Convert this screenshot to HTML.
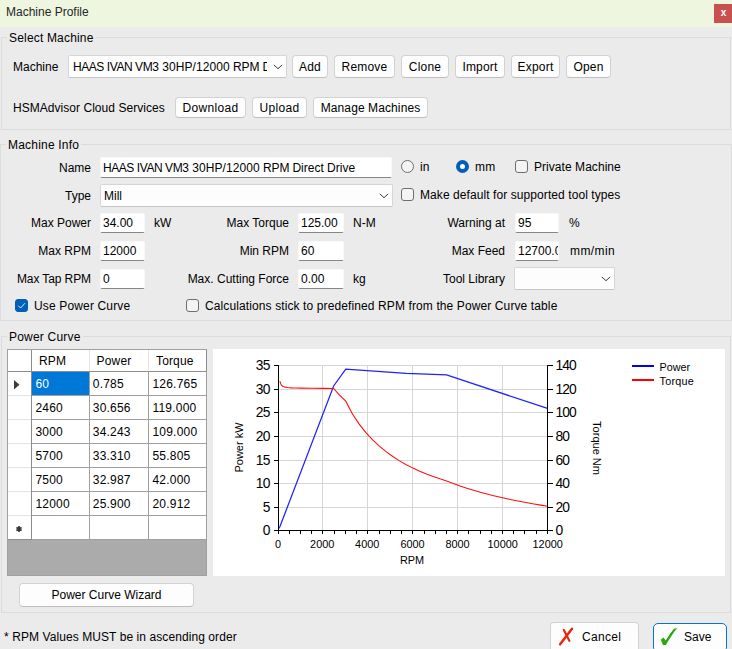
<!DOCTYPE html>
<html><head><meta charset="utf-8"><title>Machine Profile</title>
<style>
html,body{margin:0;padding:0;}
body{width:732px;height:649px;background:#ebebeb;position:relative;overflow:hidden;font-family:"Liberation Sans",Arial,sans-serif;font-size:12px;color:#000;}
.a{position:absolute;white-space:nowrap;line-height:14px;height:14px;}
.r{text-align:right;}
#tb{position:absolute;left:0;top:0;width:732px;height:27px;background:#eef6e0;}
#ttl{left:6px;top:5px;font-size:12px;color:#262626;}
#cls{position:absolute;left:714px;top:4px;width:18px;height:19px;background:#c85050;color:#fff;font-size:10px;font-weight:bold;text-align:center;line-height:18px;text-indent:1px;}
.gb{position:absolute;border:1px solid #dcdcdc;box-sizing:border-box;}
.gl{position:absolute;margin-top:1px;background:#ebebeb;padding:0 2px;line-height:14px;height:14px;white-space:nowrap;}
.btn{position:absolute;box-sizing:border-box;background:#fdfdfd;border:1px solid #d2d2d2;border-bottom-color:#bebebe;border-radius:4px;text-align:center;white-space:nowrap;line-height:20px;height:22px;}
.in{position:absolute;box-sizing:border-box;background:#fff;border:1px solid #f8f8f8;border-bottom:1px solid #868686;border-radius:2px;height:20px;line-height:18px;padding-left:2px;white-space:nowrap;overflow:hidden;}
.cb{position:absolute;box-sizing:border-box;background:#fdfdfd;border:1px solid #d6d6d6;border-bottom-color:#c6c6c6;border-radius:2px;height:22px;line-height:20px;padding-left:4px;white-space:nowrap;overflow:hidden;}
.chev{position:absolute;}
.ck{position:absolute;box-sizing:border-box;width:13px;height:13px;border:1px solid #6e6e6e;border-radius:3px;background:#f4f4f4;}
.ck.on{background:#005fb8;border-color:#005fb8;}
.rd{position:absolute;box-sizing:border-box;width:13px;height:13px;border:1px solid #6e6e6e;border-radius:50%;background:#f4f4f4;}
.rd.on{border:4px solid #005fb8;background:#fff;}

#grid{position:absolute;left:7px;top:349px;width:200px;height:227px;box-sizing:border-box;border:1px solid #a0a0a0;background:#ababab;}
#grid .gh{position:absolute;background:#fff;}
#grid .sel{position:absolute;background:#0078d7;}
#grid .hl{position:absolute;height:1px;background:#a0a0a0;}
#grid .hl.d,#grid .vl.d{background:#8c8c8c;}
#grid .hl.lt,#grid .vl.lt{background:#e3e3e3;}
#grid .vl{position:absolute;width:1px;background:#a0a0a0;}
#grid .c{position:absolute;white-space:nowrap;line-height:14px;letter-spacing:0.2px;}
#grid .c.h{letter-spacing:0.15px;}
#grid .c.w{color:#fff;}
#chart{position:absolute;left:213px;top:349px;width:512px;height:227px;background:#fff;overflow:hidden;}
</style></head><body>
<div id="tb"></div>
<div class="a" id="ttl">Machine Profile</div>
<div id="cls">x</div>

<!-- Select Machine -->
<div class="gb" style="left:1px;top:37px;width:730px;height:93px;"></div>
<div class="gl" style="left:7px;top:30px;letter-spacing:0.18px;">Select Machine</div>
<div class="a" style="left:13px;top:60px;">Machine</div>
<div class="cb" style="left:68px;top:55px;width:219px;height:23px;line-height:22px;padding-left:4px;"><div style="width:194px;overflow:hidden;letter-spacing:-0.17px;"><span style="letter-spacing:-0.44px">HAAS IVAN VM</span><span style="letter-spacing:0.06px">3 30HP/12000 </span><span style="letter-spacing:-0.15px">RPM </span><span style="letter-spacing:0">Direct Drive</span></div></div>
<svg class="chev" style="left:273px;top:64px;" width="10" height="7" viewBox="0 0 10 7"><path d="M0.8 0.9 L5 4.7 L9.2 0.9" fill="none" stroke="#3c3c3c" stroke-width="1"/></svg>
<div class="btn" style="left:292px;top:55px;width:36px;height:23px;line-height:23px;letter-spacing:0.2px;">Add</div>
<div class="btn" style="left:334px;top:55px;width:61px;height:23px;line-height:23px;letter-spacing:0.2px;">Remove</div>
<div class="btn" style="left:401px;top:55px;width:48px;height:23px;line-height:23px;letter-spacing:0.2px;">Clone</div>
<div class="btn" style="left:455px;top:55px;width:50px;height:23px;line-height:23px;letter-spacing:0.2px;">Import</div>
<div class="btn" style="left:511px;top:55px;width:49px;height:23px;line-height:23px;letter-spacing:0.2px;">Export</div>
<div class="btn" style="left:566px;top:55px;width:45px;height:23px;line-height:23px;letter-spacing:0.2px;">Open</div>
<div class="a" style="left:13px;top:101px;letter-spacing:0.04px;">HSMAdvisor Cloud Services</div>
<div class="btn" style="left:175px;top:97px;width:71px;height:21px;letter-spacing:0.3px;">Download</div>
<div class="btn" style="left:252px;top:97px;width:55px;height:21px;letter-spacing:0.3px;">Upload</div>
<div class="btn" style="left:313px;top:97px;width:115px;height:21px;letter-spacing:0.1px;">Manage Machines</div>

<!-- Machine Info -->
<div class="gb" style="left:0px;top:144px;width:732px;height:177px;"></div>
<div class="gl" style="left:6px;top:137px;letter-spacing:0.2px;">Machine Info</div>
<div class="a r" style="left:0;width:91px;top:161px;">Name</div>
<div class="in" style="left:100px;top:157px;width:292px;height:21px;line-height:21px;padding-left:2px;letter-spacing:-0.15px;"><span style="letter-spacing:-0.44px">HAAS IVAN VM</span><span style="letter-spacing:0.06px">3 30HP/12000 </span><span style="letter-spacing:-0.15px">RPM </span><span style="letter-spacing:0">Direct Drive</span></div>
<div class="rd" style="left:401px;top:160px;"></div>
<div class="a" style="left:420px;top:160px;">in</div>
<div class="rd on" style="left:456px;top:160px;"></div>
<div class="a" style="left:475px;top:160px;letter-spacing:0.3px;">mm</div>
<div class="ck" style="left:515px;top:160px;"></div>
<div class="a" style="left:534px;top:160px;letter-spacing:0.05px;">Private Machine</div>

<div class="a r" style="left:0;width:91px;top:189px;">Type</div>
<div class="cb" style="left:100px;top:184px;width:293px;height:23px;line-height:22px;padding-left:3px;">Mill</div>
<svg class="chev" style="left:379px;top:193px;" width="10" height="7" viewBox="0 0 10 7"><path d="M0.8 0.9 L5 4.7 L9.2 0.9" fill="none" stroke="#3c3c3c" stroke-width="1"/></svg>
<div class="ck" style="left:401px;top:188px;"></div>
<div class="a" style="left:420px;top:188px;letter-spacing:0.08px;">Make default for supported tool types</div>

<div class="a r" style="left:0;width:91px;top:216px;">Max Power</div>
<div class="in" style="left:100px;top:213px;width:45px;">34.00</div>
<div class="a" style="left:154px;top:216px;">kW</div>
<div class="a r" style="left:180px;width:109px;top:216px;">Max Torque</div>
<div class="in" style="left:298px;top:213px;width:46px;">125.00</div>
<div class="a" style="left:353px;top:216px;">N-M</div>
<div class="a r" style="left:400px;width:105px;top:216px;">Warning at</div>
<div class="in" style="left:515px;top:213px;width:44px;">95</div>
<div class="a" style="left:569px;top:216px;">%</div>

<div class="a r" style="left:0;width:91px;top:244px;">Max RPM</div>
<div class="in" style="left:100px;top:241px;width:45px;">12000</div>
<div class="a r" style="left:180px;width:109px;top:244px;">Min RPM</div>
<div class="in" style="left:298px;top:241px;width:46px;">60</div>
<div class="a r" style="left:400px;width:105px;top:244px;">Max Feed</div>
<div class="in" style="left:515px;top:241px;width:44px;">12700.00</div>
<div class="a" style="left:570px;top:244px;letter-spacing:0.4px;">mm/min</div>

<div class="a r" style="left:0;width:91px;top:272px;letter-spacing:-0.1px;">Max Tap RPM</div>
<div class="in" style="left:100px;top:269px;width:45px;">0</div>
<div class="a r" style="left:180px;width:109px;top:272px;">Max. Cutting Force</div>
<div class="in" style="left:298px;top:269px;width:46px;">0.00</div>
<div class="a" style="left:353px;top:272px;">kg</div>
<div class="a r" style="left:400px;width:105px;top:272px;">Tool Library</div>
<div class="cb" style="left:514px;top:267px;width:101px;height:23px;"></div>
<svg class="chev" style="left:601px;top:276px;" width="10" height="7" viewBox="0 0 10 7"><path d="M0.8 0.9 L5 4.7 L9.2 0.9" fill="none" stroke="#3c3c3c" stroke-width="1"/></svg>

<div class="ck on" style="left:15px;top:299px;"><svg width="13" height="13" viewBox="0 0 13 13" style="position:absolute;left:-1px;top:-1px"><path d="M3.2 6.6 L5.6 9 L10 4.2" fill="none" stroke="#e8f0f9" stroke-width="0.95"/></svg></div>
<div class="a" style="left:34px;top:299px;letter-spacing:0.15px;">Use Power Curve</div>
<div class="ck" style="left:186px;top:299px;"></div>
<div class="a" style="left:205px;top:299px;letter-spacing:0.11px;">Calculations stick to predefined RPM from the Power Curve table</div>

<!-- Power Curve -->
<div class="gb" style="left:1px;top:336px;width:730px;height:277px;"></div>
<div class="gl" style="left:7px;top:329px;letter-spacing:0.2px;">Power Curve</div>

<!--GS--><div id="grid">
<div class="gh" style="left:0;top:0;width:199px;height:190px;"></div>
<div class="sel" style="left:24px;top:22px;width:57px;height:23px;"></div>
<div class="hl d" style="left:0;top:21px;width:199px;"></div>
<div class="hl lt" style="left:0;top:45px;width:23px;"></div><div class="hl" style="left:23px;top:45px;width:176px;"></div>
<div class="hl lt" style="left:0;top:69px;width:23px;"></div><div class="hl" style="left:23px;top:69px;width:176px;"></div>
<div class="hl lt" style="left:0;top:93px;width:23px;"></div><div class="hl" style="left:23px;top:93px;width:176px;"></div>
<div class="hl lt" style="left:0;top:117px;width:23px;"></div><div class="hl" style="left:23px;top:117px;width:176px;"></div>
<div class="hl lt" style="left:0;top:141px;width:23px;"></div><div class="hl" style="left:23px;top:141px;width:176px;"></div>
<div class="hl lt" style="left:0;top:165px;width:23px;"></div><div class="hl" style="left:23px;top:165px;width:176px;"></div>
<div class="hl lt" style="left:0;top:189px;width:23px;"></div><div class="hl" style="left:23px;top:189px;width:176px;"></div>
<div class="hl d" style="left:0;top:189px;width:23px;"></div>
<div class="vl d" style="left:23px;top:0;height:190px;"></div>
<div class="vl" style="left:81px;top:21px;height:169px;"></div>
<div class="vl" style="left:140px;top:21px;height:169px;"></div>
<div class="vl" style="left:198px;top:21px;height:169px;"></div>
<div class="vl lt" style="left:81px;top:0;height:21px;"></div>
<div class="vl lt" style="left:140px;top:0;height:21px;"></div>
<div class="vl d" style="left:198px;top:0;height:21px;"></div>
<div class="c h" style="left:31px;top:4px;">RPM</div>
<div class="c h" style="left:88.6px;top:4px;">Power</div>
<div class="c h" style="left:148px;top:4px;">Torque</div>
<div class="c w" style="left:27.5px;top:27px;">60</div>
<div class="c" style="left:84.8px;top:27px;">0.785</div>
<div class="c" style="left:144.5px;top:27px;">126.765</div>
<div class="c" style="left:27.5px;top:51px;">2460</div>
<div class="c" style="left:84.8px;top:51px;">30.656</div>
<div class="c" style="left:144.5px;top:51px;">119.000</div>
<div class="c" style="left:27.5px;top:75px;">3000</div>
<div class="c" style="left:84.8px;top:75px;">34.243</div>
<div class="c" style="left:144.5px;top:75px;">109.000</div>
<div class="c" style="left:27.5px;top:99px;">5700</div>
<div class="c" style="left:84.8px;top:99px;">33.310</div>
<div class="c" style="left:144.5px;top:99px;">55.805</div>
<div class="c" style="left:27.5px;top:123px;">7500</div>
<div class="c" style="left:84.8px;top:123px;">32.987</div>
<div class="c" style="left:144.5px;top:123px;">42.000</div>
<div class="c" style="left:27.5px;top:147px;">12000</div>
<div class="c" style="left:84.8px;top:147px;">25.900</div>
<div class="c" style="left:144.5px;top:147px;">20.912</div>
<svg style="position:absolute;left:6px;top:30px;" width="6" height="10" viewBox="0 0 6 10"><path d="M0 0 L5.5 4.75 L0 9.5 Z" fill="#3c3c3c"/></svg>
<svg style="position:absolute;left:7px;top:175px;" width="8" height="8" viewBox="-4 -4 8 8"><path d="M0 -2.9V2.9M-2.6 -1.5L2.6 1.5M-2.6 1.5L2.6 -1.5" stroke="#3a3a3a" stroke-width="1.7" fill="none"/><circle r="1.6" fill="#3a3a3a"/></svg>
</div><!--GE-->

<!--CS--><div id="chart">
<svg width="512" height="227" viewBox="213 349 512 227" style="position:absolute;left:0;top:0;font-family:'Liberation Sans',Arial,sans-serif;">
<g stroke="#d6d6d6" stroke-width="1" shape-rendering="crispEdges"><path d="M279 365.5H547M279 389.5H547M279 412.5H547M279 436.5H547M279 460.5H547M279 483.5H547M279 507.5H547"/><path d="M322.5 365V530M367.5 365V530M412.5 365V530M457.5 365V530M502.5 365V530"/></g>
<polyline points="279.0,528.4 279.85,526.80 333.64,385.98 345.75,369.07 406.27,373.47 446.62,374.99 547.50,408.40" fill="none" stroke="#2020ff" stroke-width="1.25"/>
<polyline points="279.85,381.10 281.19,384.98 282.98,386.43 285.23,387.15 287.47,387.52 291.95,387.88 296.43,388.06 300.92,388.17 312.12,388.32 323.33,388.39 333.64,388.43 339.02,394.69 345.75,401.14 352.48,414.07 359.20,424.10 365.93,432.58 372.65,439.85 379.38,446.16 386.10,451.67 392.82,456.54 399.55,460.86 406.27,464.73 413.00,468.12 419.73,471.19 426.45,473.98 433.18,476.52 439.90,478.85 446.62,481.00 453.35,483.59 460.08,485.98 466.80,488.20 473.52,490.27 480.25,492.20 486.98,494.01 493.70,495.71 500.43,497.30 507.15,498.80 513.88,500.21 520.60,501.54 527.33,502.80 534.05,504.00 540.78,505.13 547.50,506.21" fill="none" stroke="#ff1010" stroke-width="1.1"/>
<g stroke="#000" stroke-width="1" shape-rendering="crispEdges"><path d="M278.5 365V531M547.5 365V531M278 530.5H548"/><path d="M274 365.5H278M274 389.5H278M274 412.5H278M274 436.5H278M274 460.5H278M274 483.5H278M274 507.5H278M274 530.5H278"/><path d="M548 365.5H553M548 389.5H553M548 412.5H553M548 436.5H553M548 460.5H553M548 483.5H553M548 507.5H553M548 530.5H553"/><path d="M278.5 531V534M289.5 531V534M300.5 531V534M311.5 531V534M322.5 531V534M334.5 531V534M345.5 531V534M356.5 531V534M367.5 531V534M379.5 531V534M390.5 531V534M401.5 531V534M412.5 531V534M424.5 531V534M435.5 531V534M446.5 531V534M457.5 531V534M468.5 531V534M480.5 531V534M491.5 531V534M502.5 531V534M513.5 531V534M524.5 531V534M536.5 531V534M547.5 531V534"/></g>
<g font-size="13.8px" letter-spacing="-0.85" text-anchor="end"><text x="269.5" y="370">35</text><text x="269.5" y="394">30</text><text x="269.5" y="417">25</text><text x="269.5" y="441">20</text><text x="269.5" y="465">15</text><text x="269.5" y="488">10</text><text x="269.5" y="512">5</text><text x="269.5" y="535">0</text></g>
<g font-size="13.8px" letter-spacing="-0.85"><text x="555.4" y="370">140</text><text x="555.4" y="394">120</text><text x="555.4" y="417">100</text><text x="555.4" y="441">80</text><text x="555.4" y="465">60</text><text x="555.4" y="488">40</text><text x="555.4" y="512">20</text><text x="555.4" y="535">0</text></g>
<g font-size="10.9px" text-anchor="middle"><text x="278" y="548">0</text><text x="322.2" y="548">2000</text><text x="367.2" y="548">4000</text><text x="412.5" y="548">6000</text><text x="457.5" y="548">8000</text><text x="502.7" y="548">10000</text><text x="547.7" y="548">12000</text><text x="412" y="563.5">RPM</text></g>
<text font-size="11px" text-anchor="middle" transform="translate(242.5 447.5) rotate(-90)">Power kW</text>
<text font-size="11px" text-anchor="middle" transform="translate(593 448) rotate(90)">Torque Nm</text>
<path d="M632 366H654" stroke="#0000ff" stroke-width="2" shape-rendering="crispEdges"/>
<path d="M632 380H654" stroke="#ff0000" stroke-width="2" shape-rendering="crispEdges"/>
<g font-size="10.8px"><text x="659.5" y="371">Power</text><text x="659.5" y="385" letter-spacing="0.25">Torque</text></g>
</svg>
</div><!--CE-->

<div class="btn" style="left:19px;top:583px;width:175px;height:24px;line-height:22px;">Power Curve Wizard</div>
<div class="a" style="left:4px;top:630px;letter-spacing:0.08px;">* RPM Values MUST be in ascending order</div>

<div class="btn" style="left:550px;top:622px;width:89px;height:30px;"></div>
<svg style="position:absolute;left:555px;top:624px;" width="22" height="25" viewBox="555 624 22 25"><path d="M572 628.8 L560.1 644.2" fill="none" stroke="#e6290d" stroke-width="2.5" stroke-linecap="round"/><path d="M563.8 630 L569.4 640.8" fill="none" stroke="#e6290d" stroke-width="2.2" stroke-linecap="round"/></svg>
<div class="a" style="left:582px;top:630px;letter-spacing:0.3px;">Cancel</div>
<div class="btn" style="left:653px;top:622.5px;width:73.5px;height:29px;border:1.4px solid #0074d0;border-radius:5px;"></div>
<svg style="position:absolute;left:658px;top:624px;" width="22" height="25" viewBox="658 624 22 25"><path d="M660.8 639.7 L663.4 637.5 L665.7 640.6 C668.5 636 672 631 674 628.7 L677.2 627.9 C673 633 669 639.5 665.8 645.1 L663 645.1 Z" fill="#27a80c"/></svg>
<div class="a" style="left:684px;top:630px;">Save</div>

</body></html>
